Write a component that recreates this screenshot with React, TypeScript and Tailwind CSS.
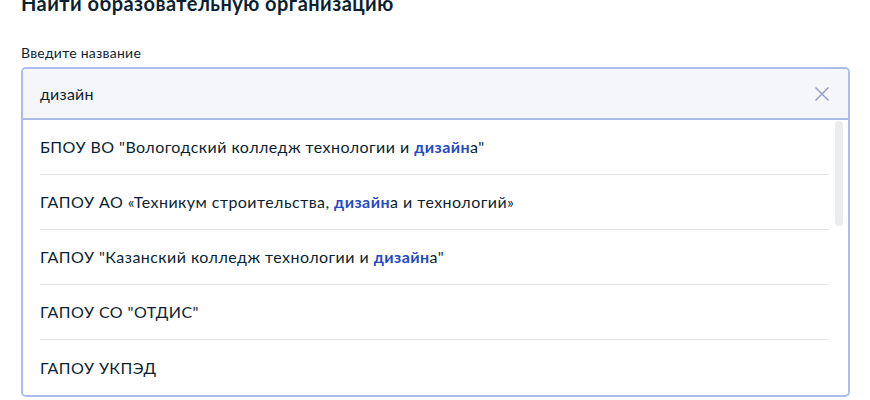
import React from "react";

const items: [string, string, string][] = [
  ['БПОУ ВО "Вологодский колледж технологии и ', "дизайн", 'а"'],
  ["ГАПОУ АО «Техникум строительства, ", "дизайн", "а и технологий»"],
  ['ГАПОУ "Казанский колледж технологии и ', "дизайн", 'а"'],
  ['ГАПОУ СО "ОТДИС"', "", ""],
  ["ГАПОУ УКПЭД", "", ""],
];

export default function App() {
  return (
    <div
      className="w-[870px] h-[400px] overflow-hidden bg-white text-[#0b1f33]"
      style={{ fontFamily: "Lato, 'Noto Sans', sans-serif" }}
    >
      <div className="pl-[21px] pr-[20px]">
        <h1 className="mt-[-9px] text-[20px] leading-[24px] font-bold tracking-[0.45px]">
          Найти образовательную организацию
        </h1>
        <div className="mt-[29px] text-[14px] leading-[18px] tracking-[0.25px]">Введите название</div>
        <div className="mt-[5px] w-[829px] h-[330px] border-2 border-[#aebcec] rounded-[5px] flex flex-col overflow-hidden">
          <div className="h-[51px] shrink-0 bg-[#f5f6fa] border-b-2 border-[#aebcec] flex items-center pl-[17px] pr-[18px]">
            <span className="flex-1 text-[16px] tracking-[0.2px]">дизайн</span>
            <svg width="16" height="16" viewBox="0 0 16 16" className="mt-[1px]">
              <path d="M1.5 1.5 L14.5 14.5 M14.5 1.5 L1.5 14.5" stroke="#8e9bc7" strokeWidth="1.4" fill="none" />
            </svg>
          </div>
          <div className="flex flex-1 min-h-0">
            <div className="flex-1 pl-[17px] flex flex-col">
              {items.map((it, i) => (
                <div
                  key={i}
                  className={
                    "h-[55px] shrink-0 flex items-center text-[16px] tracking-[0.45px] " +
                    (i < items.length - 1 ? "border-b border-[#e4e5e8]" : "")
                  }
                >
                  <span>
                    {it[0]}
                    {it[1] && <b className="font-bold text-[#2449c4]">{it[1]}</b>}
                    {it[2]}
                  </span>
                </div>
              ))}
            </div>
            <div className="w-[19px] shrink-0 pl-[6px] pt-[1px]">
              <div className="w-[8px] h-[105px] rounded-[4px] bg-[#ebecee]" />
            </div>
          </div>
        </div>
      </div>
    </div>
  );
}
